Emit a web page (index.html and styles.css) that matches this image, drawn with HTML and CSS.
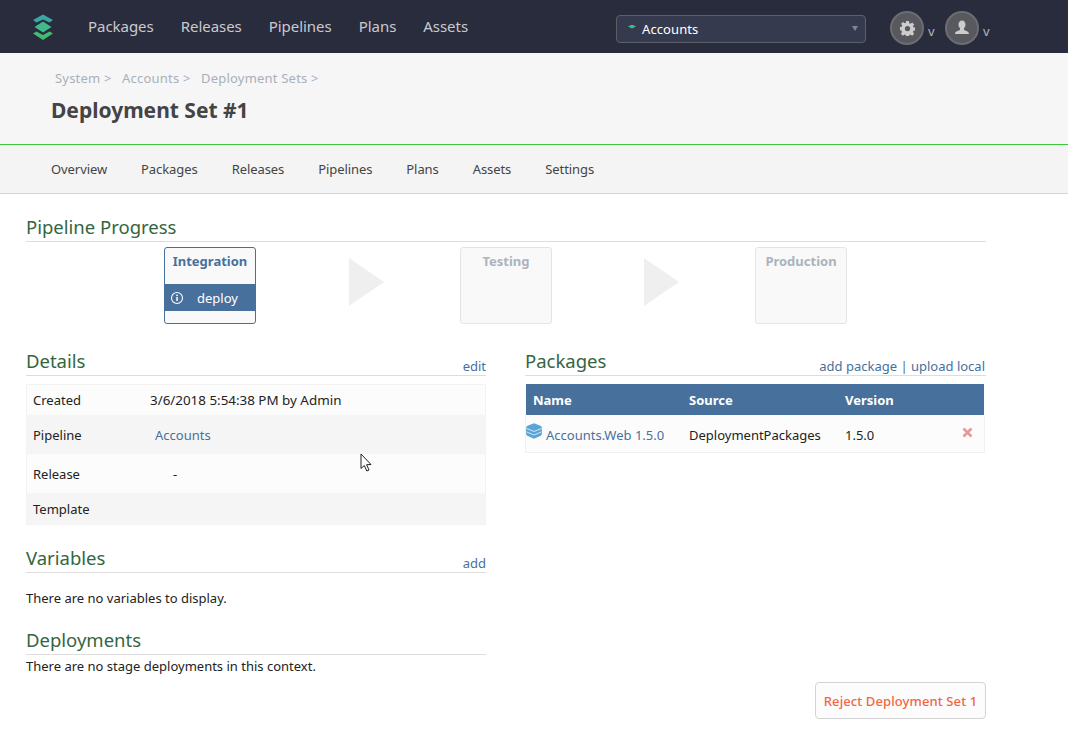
FILE: index.html
```html
<!DOCTYPE html>
<html>
<head>
  <title>Deployment Set #1</title>
  <link rel="stylesheet" href="styles.css">
</head>
<body>
  <header class="topbar">
    <svg class="logo" width="24" height="28" viewBox="0 0 24 28">
      <path d="M12 1.500 L22 7 L18.500 9.500 L12 6.500 L5.500 9.500 L2 7 Z" fill="#3aa8a0"/>
      <path d="M12 8.500 L20.500 14 L12 19.500 L3.500 14 Z" fill="#42b98c"/>
      <path d="M2 20.500 L5.500 18.500 L12 22 L18.500 18.500 L22 20.500 L12 27 Z" fill="#44bb6c"/>
    </svg>
    <nav class="topnav">
      <a>Packages</a>
      <a>Releases</a>
      <a>Pipelines</a>
      <a>Plans</a>
      <a>Assets</a>
    </nav>
    <div class="picker">
      <span class="picker-dot"></span>
      <span class="picker-text">Accounts</span>
      <span class="picker-caret"></span>
    </div>
    <div class="round-btn">
      <svg width="15" height="15" viewBox="0 0 16 16"><path fill="#ccc" fill-rule="evenodd" d="M6.500 0h3l.4 2.300 1.200.5 1.900-1.300 2.100 2.100-1.300 1.900.5 1.200 2.300.4v3l-2.300.4-.5 1.200 1.300 1.900-2.100 2.100-1.900-1.300-1.200.5-.4 2.300h-3l-.4-2.300-1.200-.5-1.900 1.300-2.100-2.100 1.300-1.900-.5-1.200L-.4 9.500v-3l2.300-.4.5-1.200L1.100 3 3.200 1l1.900 1.300 1.200-.5zM8 5.200a2.800 2.800 0 1 0 0 5.600 2.800 2.800 0 0 0 0-5.600z"/></svg>
    </div>
    <span class="chev">v</span>
    <div class="round-btn">
      <svg width="16" height="16" viewBox="0 0 16 16"><path fill="#ccc" d="M8 0.500c2.200 0 3.500 1.700 3.500 4 0 1.600-.7 3-1.500 3.800v1.800c1.500.8 5 1.300 5 3.900H1c0-2.600 3.500-3.100 5-3.900V8.300C5.200 7.500 4.500 6.100 4.500 4.500 4.500 2.200 5.800.5 8 .5z"/></svg>
    </div>
    <span class="chev">v</span>
  </header>

  <div class="subhead">
    <div class="crumbs">
      <span>System &gt;</span>
      <span>Accounts &gt;</span>
      <span>Deployment Sets &gt;</span>
    </div>
    <h1>Deployment Set #1</h1>
  </div>

  <nav class="subnav">
    <a>Overview</a>
    <a>Packages</a>
    <a>Releases</a>
    <a>Pipelines</a>
    <a>Plans</a>
    <a>Assets</a>
    <a>Settings</a>
  </nav>

  <main class="content">
    <h2 class="section-title progress-title">Pipeline Progress</h2>

    <div class="stages">
      <div class="stage stage-active">
        <div class="stage-name">Integration</div>
        <div class="stage-item">
          <svg width="14" height="14" viewBox="0 0 14 14"><circle cx="7" cy="7" r="5.500" fill="none" stroke="#fff" stroke-width="1.100"/><rect x="6.300" y="6" width="1.500" height="4" fill="#fff"/><rect x="6.300" y="3.600" width="1.500" height="1.500" fill="#fff"/></svg>
          <span>deploy</span>
        </div>
      </div>
      <div class="arrow"></div>
      <div class="stage">
        <div class="stage-name">Testing</div>
      </div>
      <div class="arrow arrow-second"></div>
      <div class="stage">
        <div class="stage-name">Production</div>
      </div>
    </div>

    <div class="columns">
      <div class="col-left">
        <div class="section-head">
          <h2 class="section-title">Details</h2>
          <a class="link">edit</a>
        </div>
        <div class="details">
          <div class="detail-row row-created"><span class="detail-label">Created</span><span class="detail-value">3/6/2018 5:54:38 PM by Admin</span></div>
          <div class="detail-row row-tall row-alt"><span class="detail-label">Pipeline</span><a class="link detail-link">Accounts</a></div>
          <div class="detail-row row-tall"><span class="detail-label">Release</span><span class="detail-dash">-</span></div>
          <div class="detail-row row-template row-alt"><span class="detail-label">Template</span></div>
        </div>

        <div class="section-head variables-head">
          <h2 class="section-title">Variables</h2>
          <a class="link">add</a>
        </div>
        <p class="empty variables-empty">There are no variables to display.</p>

        <div class="section-head deployments-head">
          <h2 class="section-title">Deployments</h2>
        </div>
        <p class="empty">There are no stage deployments in this context.</p>
      </div>

      <div class="col-right">
        <div class="section-head">
          <h2 class="section-title">Packages</h2>
          <span class="head-links"><a class="link">add package</a> | <a class="link link-upload">upload local</a></span>
        </div>
        <div class="pkg-table">
          <div class="pkg-head">
            <span class="pkg-name">Name</span>
            <span class="pkg-source">Source</span>
            <span>Version</span>
          </div>
          <div class="pkg-row">
            <span class="pkg-name pkg-name-cell">
              <svg width="16" height="16" viewBox="0 0 16 16"><path d="M8 0.300 L14.500 2.800 Q15.800 3.300 15.800 4.600 V11 Q15.800 12.200 14.800 12.800 L8 15.800 L1.200 12.800 Q.2 12.200 .2 11 V4.600 Q.2 3.300 1.500 2.800 Z" fill="#5aa5d8"/><path d="M.8 5.500 L8 8.500 L15.200 5.500 M.8 9 L8 12 L15.200 9" fill="none" stroke="#cfe5f5" stroke-width="1"/></svg>
              <a class="link">Accounts.Web 1.5.0</a>
            </span>
            <span class="pkg-source">DeploymentPackages</span>
            <span>1.5.0</span>
            <svg class="pkg-remove" width="11" height="11" viewBox="0 0 11 11"><path d="M1.500 1.500 L9.500 9.500 M9.500 1.500 L1.500 9.500" stroke="#e39a9a" stroke-width="2.600"/></svg>
          </div>
        </div>
      </div>
    </div>

    <div class="actions">
      <button class="reject">Reject Deployment Set 1</button>
    </div>
  </main>

  <svg class="cursor" width="14" height="20" viewBox="0 0 14 20"><path d="M1 1 V15.500 L4.300 12.500 L6.800 18 L9 17 L6.600 11.700 L11 11.500 Z" fill="#fff" stroke="#222" stroke-width="1"/></svg>
</body>
</html>
```

FILE: styles.css
```css
body {
  font-family: "Noto Sans", "Open Sans", sans-serif;
  font-size: 13px;
  margin: 0;
  background-color: #fff;
  color: #222;
}

a {
  text-decoration: none;
}

.topbar {
  display: flex;
  align-items: center;
  height: 53px;
  background-color: #292c3d;
  padding-left: 31px;
}

.logo {
  flex: none;
}

.topnav {
  display: flex;
  gap: 27px;
  margin-left: 33px;
  width: 528px;
  font-size: 15px;
  letter-spacing: -0.04px;
  color: #c9cace;
  margin-top: -2px;
}

.picker {
  display: flex;
  align-items: center;
  box-sizing: border-box;
  width: 250px;
  height: 28px;
  margin-top: 4px;
  background-color: #363a4f;
  border: 1px solid #5c5e68;
  border-radius: 4px;
  padding: 0 7px 0 11px;
  color: #fff;
  margin-right: 24px;
}

.picker-dot {
  width: 8px;
  height: 4px;
  margin-top: -4px;
  background-color: #3dbb8e;
  clip-path: polygon(50% 0, 100% 50%, 50% 100%, 0 50%);
}

.picker-text {
  flex: 1;
  margin-left: 6px;
  letter-spacing: 0.1px;
}

.picker-caret {
  border-left: 3px solid transparent;
  border-right: 3px solid transparent;
  border-top: 5px solid #85868e;
}

.round-btn {
  display: flex;
  align-items: center;
  justify-content: center;
  box-sizing: border-box;
  width: 34px;
  height: 34px;
  margin-top: 3px;
  border-radius: 50%;
  background-color: #58595f;
  border: 2px solid #6c6d72;
}

.chev {
  width: 21px;
  padding-left: 4px;
  box-sizing: border-box;
  margin-top: 9px;
  font-size: 13px;
  color: #b5b6bb;
}

.subhead {
  box-sizing: border-box;
  height: 92px;
  background-color: #f6f6f6;
  border-bottom: 1px solid #3ec63e;
  padding: 16px 0 0 51px;
}

.crumbs {
  display: flex;
  gap: 10.5px;
  padding-left: 4px;
  letter-spacing: 0.2px;
  color: #a9b0b9;
}

h1 {
  font-size: 21px;
  font-weight: 700;
  color: #444;
  margin: 9px 0 0;
  line-height: 29px;
}

.subnav {
  display: flex;
  gap: 34px;
  box-sizing: border-box;
  height: 49px;
  align-items: center;
  padding-left: 51px;
  letter-spacing: -0.08px;
  background-color: #f4f4f4;
  border-bottom: 1px solid #c5dfc5;
  color: #444;
}

.content {
  width: 960px;
  margin-left: 26px;
}

.section-title {
  font-size: 18.5px;
  font-weight: 400;
  color: #33663f;
  margin: 0;
  line-height: 24px;
  padding-bottom: 2px;
}

.progress-title {
  margin-top: 21px;
  border-bottom: 1px solid #ddd;
  height: 24px;
}

.stages {
  display: flex;
  align-items: flex-start;
  margin-top: 5px;
  padding-left: 138px;
}

.stage {
  box-sizing: border-box;
  width: 92px;
  height: 77px;
  background-color: #f9f9f9;
  border: 1px solid #e4e4e4;
  border-radius: 3px;
  color: #abb3bd;
}

.stage-active {
  border-color: #48709c;
  color: #48709c;
}

.stage-name {
  font-weight: 700;
  text-align: center;
  line-height: 26px;
}

.stage-item {
  display: flex;
  align-items: center;
  gap: 13px;
  height: 27px;
  margin-top: 10px;
  padding-left: 5px;
  background-color: #48709c;
  color: #fff;
}

.arrow {
  width: 0;
  height: 0;
  margin: 11px 76px 0 93px;
  border-left: 35px solid #efefef;
  border-top: 24.5px solid transparent;
  border-bottom: 24.5px solid transparent;
}

.arrow-second {
  margin-left: 92px;
}

.columns {
  display: flex;
  gap: 39px;
  margin-top: 24px;
}

.col-left {
  width: 460px;
}

.col-right {
  width: 461px;
}

.section-head {
  display: flex;
  justify-content: space-between;
  align-items: flex-end;
  height: 27px;
  border-bottom: 1px solid #ddd;
}

.link {
  color: #48709c;
}

.head-links {
  color: #48709c;
  padding-right: 1px;
}

.section-head .link {
  line-height: 18px;
}

.details {
  margin-top: 8px;
  outline: 1px solid #f3f3f3;
  outline-offset: -1px;
}

.detail-row {
  display: flex;
  align-items: center;
  background-color: #fcfcfc;
}

.row-created {
  height: 31px;
}

.row-tall {
  height: 39px;
}

.row-template {
  height: 32px;
}

.row-alt {
  background-color: #f5f5f5;
}

.detail-label {
  width: 124px;
  padding-left: 7px;
  box-sizing: border-box;
}

.detail-value {
  font-size: 13.4px;
}

.detail-link {
  margin-left: 5px;
}

.detail-dash {
  margin-left: 23px;
}

.variables-head {
  margin-top: 20px;
}

.variables-empty {
  margin: 16px 0 0;
  padding-top: 14px;
}

.deployments-head {
  margin-top: 20px;
}

.empty {
  margin: 2px 0 0;
  line-height: 18px;
}

.pkg-table {
  margin: 8px 2px 0 1px;
}

.pkg-head {
  display: flex;
  align-items: center;
  height: 31px;
  background-color: #48709c;
  color: #fff;
  font-weight: 700;
}

.pkg-name {
  width: 163px;
  padding-left: 7px;
  box-sizing: border-box;
}

.pkg-source {
  width: 156px;
}

.pkg-row {
  display: flex;
  align-items: center;
  position: relative;
  height: 38px;
  margin: 0 -1px;
  padding-top: 3px;
  border: 1px solid #f0f0f0;
  border-top: none;
  box-sizing: border-box;
  background-color: #fcfcfc;
}

.pkg-name-cell {
  display: flex;
  align-items: center;
  gap: 4px;
  padding-left: 0;
}

.pkg-name-cell svg {
  margin-top: -8px;
}

.pkg-remove {
  position: absolute;
  right: 11px;
  top: 12px;
}

.actions {
  display: flex;
  justify-content: flex-end;
  margin-top: 7px;
}

.reject {
  font-family: inherit;
  font-size: 13px;
  font-weight: 500;
  letter-spacing: 0.1px;
  width: 171px;
  height: 37px;
  padding: 0;
  color: #f5643f;
  background-color: #fcfcfd;
  border: 1px solid #d3d3d6;
  border-radius: 4px;
}

.cursor {
  position: absolute;
  left: 360px;
  top: 453px;
}
```
